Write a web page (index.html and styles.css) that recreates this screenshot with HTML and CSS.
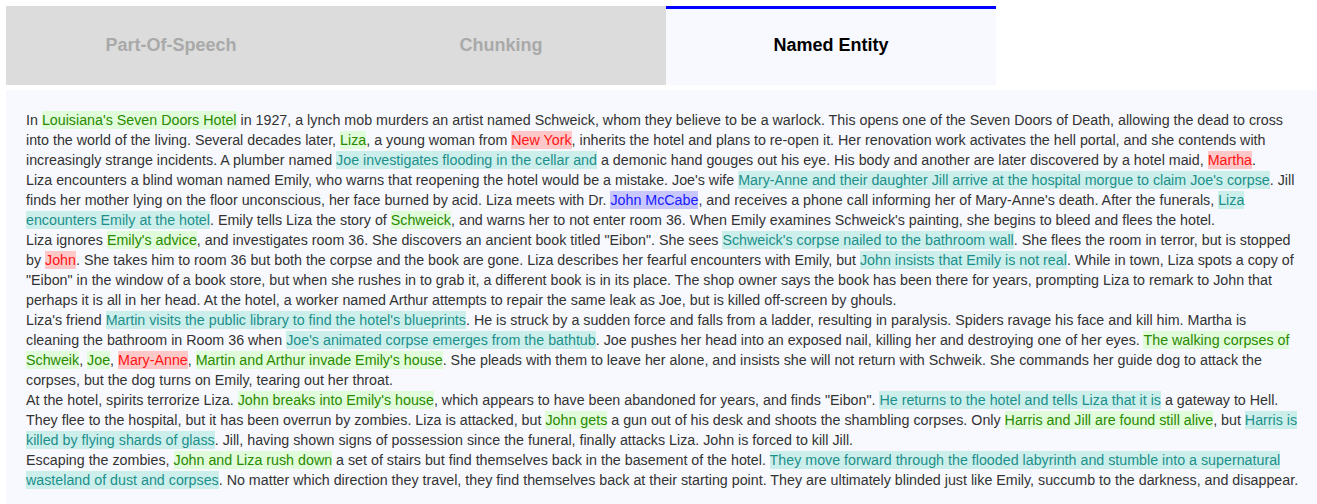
FILE: index.html
```html
<!DOCTYPE html>
<html lang="en">
<head>
<meta charset="utf-8">
<title>Named Entity</title>
<link rel="stylesheet" href="styles.css">
</head>
<body>
<div class="tabs">
  <div class="tab">Part-Of-Speech</div>
  <div class="tab">Chunking</div>
  <div class="tab active">Named Entity</div>
</div>
<div class="panel">
  <div class="para">In <span class="ent g">Louisiana's Seven Doors Hotel</span> in 1927, a lynch mob murders an artist named Schweick, whom they believe to be a warlock. This opens one of the Seven Doors of Death, allowing the dead to cross into the world of the living. Several decades later, <span class="ent g">Liza</span>, a young woman from <span class="ent r">New York</span>, inherits the hotel and plans to re-open it. Her renovation work activates the hell portal, and she contends with increasingly strange incidents. A plumber named <span class="ent t">Joe investigates flooding in the cellar and</span> a demonic hand gouges out his eye. His body and another are later discovered by a hotel maid, <span class="ent r">Martha</span>.</div>
  <div class="para">Liza encounters a blind woman named Emily, who warns that reopening the hotel would be a mistake. Joe's wife <span class="ent t">Mary-Anne and their daughter Jill arrive at the hospital morgue to claim Joe's corpse</span>. Jill finds her mother lying on the floor unconscious, her face burned by acid. Liza meets with Dr. <span class="ent b">John McCabe</span>, and receives a phone call informing her of Mary-Anne's death. After the funerals, <span class="ent t">Liza encounters Emily at the hotel</span>. Emily tells Liza the story of <span class="ent g">Schweick</span>, and warns her to not enter room 36. When Emily examines Schweick's painting, she begins to bleed and flees the hotel.</div>
  <div class="para">Liza ignores <span class="ent g">Emily's advice</span>, and investigates room 36. She discovers an ancient book titled "Eibon". She sees <span class="ent t">Schweick's corpse nailed to the bathroom wall</span>. She flees the room in terror, but is stopped by <span class="ent r">John</span>. She takes him to room 36 but both the corpse and the book are gone. Liza describes her fearful encounters with Emily, but <span class="ent t">John insists that Emily is not real</span>. While in town, Liza spots a copy of "Eibon" in the window of a book store, but when she rushes in to grab it, a different book is in its place. The shop owner says the book has been there for years, prompting Liza to remark to John that perhaps it is all in her head. At the hotel, a worker named Arthur attempts to repair the same leak as Joe, but is killed off-screen by ghouls.</div>
  <div class="para">Liza's friend <span class="ent t">Martin visits the public library to find the hotel's blueprints</span>. He is struck by a sudden force and falls from a ladder, resulting in paralysis. Spiders ravage his face and kill him. Martha is cleaning the bathroom in Room 36 when <span class="ent t">Joe's animated corpse emerges from the bathtub</span>. Joe pushes her head into an exposed nail, killing her and destroying one of her eyes. <span class="ent g">The walking corpses of Schweik</span>, <span class="ent g">Joe</span>, <span class="ent r">Mary-Anne</span>, <span class="ent g">Martin and Arthur invade Emily's house</span>. She pleads with them to leave her alone, and insists she will not return with Schweik. She commands her guide dog to attack the corpses, but the dog turns on Emily, tearing out her throat.</div>
  <div class="para">At the hotel, spirits terrorize Liza. <span class="ent g">John breaks into Emily's house</span>, which appears to have been abandoned for years, and finds "Eibon". <span class="ent t">He returns to the hotel and tells Liza that it is</span> a gateway to Hell. They flee to the hospital, but it has been overrun by zombies. Liza is attacked, but <span class="ent g">John gets</span> a gun out of his desk and shoots the shambling corpses. Only <span class="ent g">Harris and Jill are found still alive</span>, but <span class="ent t">Harris is killed by flying shards of glass</span>. Jill, having shown signs of possession since the funeral, finally attacks Liza. John is forced to kill Jill.</div>
  <div class="para">Escaping the zombies, <span class="ent g">John and Liza rush down</span> a set of stairs but find themselves back in the basement of the hotel. <span class="ent t">They move forward through the flooded labyrinth and stumble into a supernatural wasteland of dust and corpses</span>. No matter which direction they travel, they find themselves back at their starting point. They are ultimately blinded just like Emily, succumb to the darkness, and disappear.</div>
</div>
</body>
</html>
```
FILE: styles.css
```css
html, body {
  background: #ffffff;
}
body {
  margin: 6px 0 0 6px;
  font-family: "Liberation Sans", Arial, sans-serif;
}
.tabs {
  display: flex;
  width: 990px;
}
.tab {
  flex: 1 1 0;
  height: 79px;
  box-sizing: border-box;
  border-top: 3px solid transparent;
  padding-bottom: 3px;
  background: #dcdcdc;
  color: #a9a9a9;
  font-size: 18px;
  font-weight: bold;
  display: flex;
  align-items: center;
  justify-content: center;
}
.tab.active {
  background: #f8f9fe;
  border-top-color: #0000ff;
  color: #000000;
}
.panel {
  margin-top: 5px;
  background: #f8f9fe;
  padding: 20px 15px 20px 20px;
  font-size: 14.27px;
  line-height: 20px;
  color: #333333;
}
.ent {
  padding: 1px 0;
}
.ent.g {
  background: #e0fcda;
  color: #2a8a00;
}
.ent.r {
  background: #ffc8c8;
  color: #ff1515;
}
.ent.t {
  background: #ccefec;
  color: #1d8f8b;
}
.ent.b {
  background: #c8c8ff;
  color: #1a1aff;
}
```
